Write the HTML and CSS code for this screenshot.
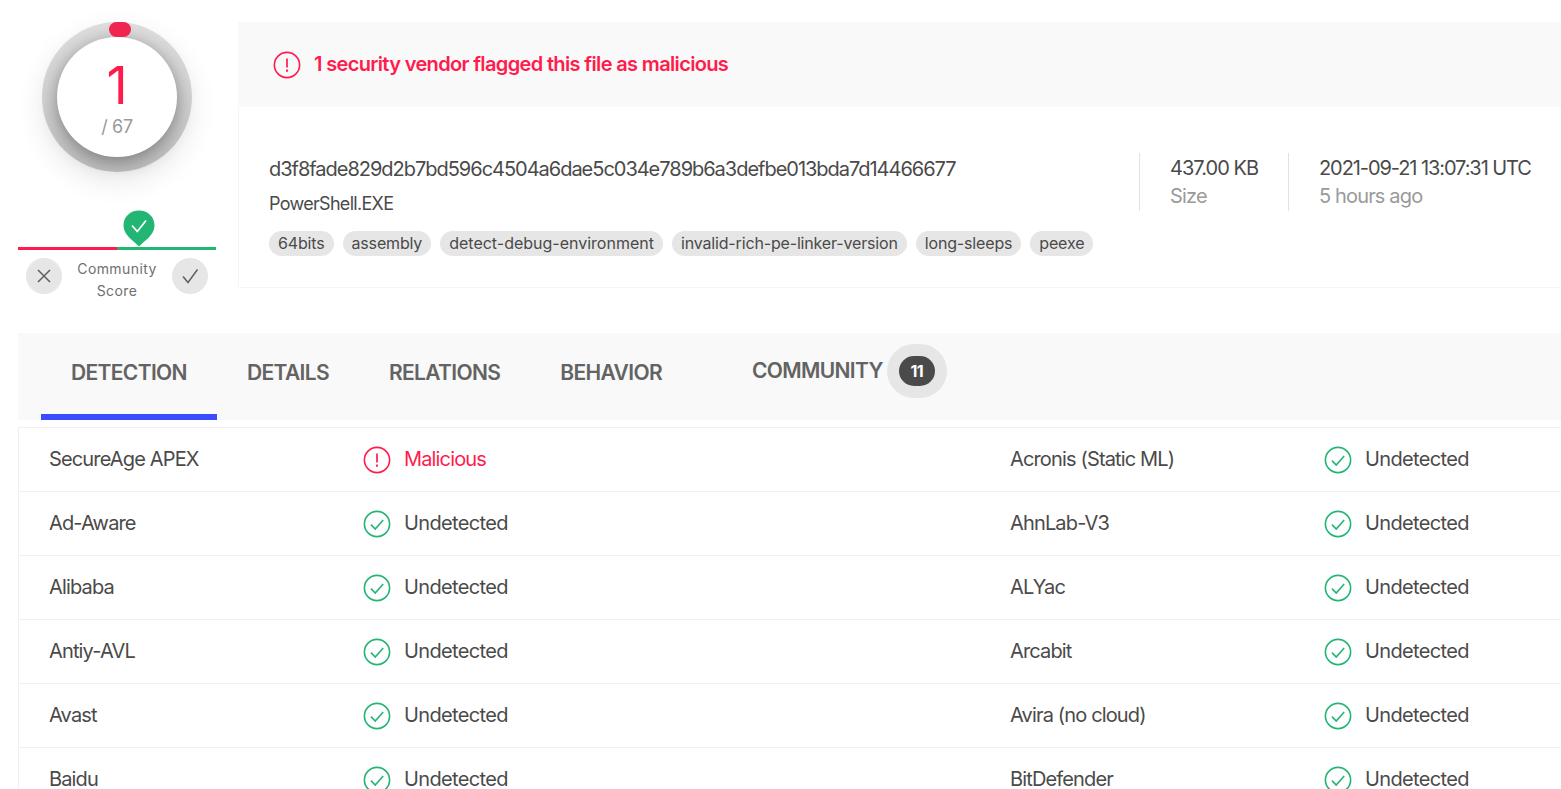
FILE: index.html
```html
<!DOCTYPE html>
<html lang="en">
<head>
<meta charset="utf-8">
<title>VirusTotal</title>
<link rel="stylesheet" href="styles.css">
</head>
<body>
<svg class="sprite" width="0" height="0" aria-hidden="true">
  <symbol id="warn" viewBox="0 0 28 28"><circle cx="14" cy="14" r="12.6" fill="none" stroke="currentColor" stroke-width="1.6"/><path d="M14 7.500v9" stroke="currentColor" stroke-width="1.700" fill="none"/><path d="M14 18.600v2.100" stroke="currentColor" stroke-width="1.900" fill="none"/></symbol>
  <symbol id="ok" viewBox="0 0 28 28"><circle cx="14" cy="14" r="12.6" fill="none" stroke="currentColor" stroke-width="1.6"/><path d="M8 14.600l4.200 4.400 8-9" stroke="currentColor" stroke-width="1.600" fill="none"/></symbol>
</svg>
<div class="page">
  <section class="top">
    <aside class="score">
      <div class="ring">
        <span class="pill"></span>
        <div class="disc">
          <span class="positives">1</span>
          <span class="total">/ 67</span>
        </div>
      </div>
      <div class="vote">
        <svg class="shield" width="32" height="37" viewBox="0 0 32 37"><path d="M16 36.500C11 31 0.500 25.500 0.500 15.500C0.500 6.500 7.500 0.500 16 0.500C24.500 0.500 31.500 6.500 31.500 15.500C31.500 25.500 21 31 16 36.500Z" fill="#22b573"/><path d="M9 15.500l5.300 6 8.700-11" fill="none" stroke="#fff" stroke-width="1.700"/></svg>
        <div class="meter"><span class="meter-bad"></span><span class="meter-good"></span></div>
        <div class="vote-row">
          <span class="vote-btn"><svg width="16" height="16" viewBox="0 0 16 16"><path d="M2 2l12 12M14 2L2 14" stroke="#5f5f5f" stroke-width="1.500" fill="none"/></svg></span>
          <span class="vote-label">Community<br>Score</span>
          <span class="vote-btn"><svg width="18" height="16" viewBox="0 0 18 16"><path d="M2 8.500l5 6L16.500 1.500" stroke="#5f5f5f" stroke-width="1.500" fill="none"/></svg></span>
        </div>
      </div>
    </aside>
    <div class="card">
      <div class="banner">
        <svg class="ico red"><use href="#warn"/></svg>
        <span class="banner-text">1 security vendor flagged this file as malicious</span>
      </div>
      <div class="info">
        <div class="ident">
          <div class="hash">d3f8fade829d2b7bd596c4504a6dae5c034e789b6a3defbe013bda7d14466677</div>
          <div class="fname">PowerShell.EXE</div>
          <div class="tags">
            <span class="tag">64bits</span>
            <span class="tag">assembly</span>
            <span class="tag tag-wide">detect-debug-environment</span>
            <span class="tag">invalid-rich-pe-linker-version</span>
            <span class="tag">long-sleeps</span>
            <span class="tag">peexe</span>
          </div>
        </div>
        <div class="stat stat-size"><div class="stat-main">437.00 KB</div><div class="stat-sub">Size</div></div>
        <div class="stat stat-date"><div class="stat-main">2021-09-21 13:07:31 UTC</div><div class="stat-sub">5 hours ago</div></div>
      </div>
    </div>
  </section>
  <nav class="tabs">
    <a class="tab tab-active">DETECTION</a>
    <a class="tab">DETAILS</a>
    <a class="tab">RELATIONS</a>
    <a class="tab">BEHAVIOR</a>
    <a class="tab tab-community">COMMUNITY <span class="halo"><span class="count">11</span></span></a>
  </nav>
  <div class="table">
    <div class="row">
      <span class="name">SecureAge APEX</span><span class="verdict red"><svg class="ico"><use href="#warn"/></svg><span class="vtext vtext-bad">Malicious</span></span>
      <span class="name">Acronis (Static ML)</span><span class="verdict"><svg class="ico green"><use href="#ok"/></svg><span class="vtext">Undetected</span></span>
    </div>
    <div class="row">
      <span class="name">Ad-Aware</span><span class="verdict"><svg class="ico green"><use href="#ok"/></svg><span class="vtext">Undetected</span></span>
      <span class="name">AhnLab-V3</span><span class="verdict"><svg class="ico green"><use href="#ok"/></svg><span class="vtext">Undetected</span></span>
    </div>
    <div class="row">
      <span class="name">Alibaba</span><span class="verdict"><svg class="ico green"><use href="#ok"/></svg><span class="vtext">Undetected</span></span>
      <span class="name">ALYac</span><span class="verdict"><svg class="ico green"><use href="#ok"/></svg><span class="vtext">Undetected</span></span>
    </div>
    <div class="row">
      <span class="name">Antiy-AVL</span><span class="verdict"><svg class="ico green"><use href="#ok"/></svg><span class="vtext">Undetected</span></span>
      <span class="name">Arcabit</span><span class="verdict"><svg class="ico green"><use href="#ok"/></svg><span class="vtext">Undetected</span></span>
    </div>
    <div class="row">
      <span class="name">Avast</span><span class="verdict"><svg class="ico green"><use href="#ok"/></svg><span class="vtext">Undetected</span></span>
      <span class="name">Avira (no cloud)</span><span class="verdict"><svg class="ico green"><use href="#ok"/></svg><span class="vtext">Undetected</span></span>
    </div>
    <div class="row">
      <span class="name">Baidu</span><span class="verdict"><svg class="ico green"><use href="#ok"/></svg><span class="vtext">Undetected</span></span>
      <span class="name">BitDefender</span><span class="verdict"><svg class="ico green"><use href="#ok"/></svg><span class="vtext">Undetected</span></span>
    </div>
  </div>
</div>
</body>
</html>
```
FILE: styles.css
```css
* { box-sizing: border-box; }
html, body { margin: 0; height: 100%; overflow: hidden; background: #fff; }
body { font-family: Inter, "Liberation Sans", sans-serif; color: #4a4a4a; }
.sprite { position: absolute; }
.page { width: 1561px; height: 789px; overflow: hidden; padding-top: 22px; }
.top { display: flex; height: 311px; }
.score { width: 238px; flex: none; padding-left: 18px; display: flex; flex-direction: column; }
.ring {
  position: relative; width: 150px; height: 150px; margin-left: 24px; border-radius: 50%;
  background: linear-gradient(180deg, #dedede 0%, #d2d2d2 50%, #bdbdbd 100%);
  box-shadow: 0 10px 28px rgba(0,0,0,.09);
  display: flex; align-items: center; justify-content: center;
}
.pill { position: absolute; top: 0; left: 67px; width: 22px; height: 15px; border-radius: 8px; background: #ef2450; }
.disc {
  width: 120px; height: 120px; border-radius: 50%; background: #fff;
  box-shadow: 0 4px 18px rgba(0,0,0,.38);
  display: flex; flex-direction: column; align-items: center; padding-top: 21px;
}
.positives { font-size: 52px; line-height: 56px; color: #ff1c4d; font-weight: 400; }
.total { font-size: 18px; line-height: 22px; color: #9a9a9a; margin-top: 2px; letter-spacing: -.3px; }
.vote { margin-top: 38px; display: flex; flex-direction: column; width: 198px; }
.shield { display: block; margin-left: 105px; }
.meter { display: flex; width: 198px; height: 3px; }
.meter-bad { flex: 1; background: #ff1c4d; }
.meter-good { flex: 1; background: #22b573; }
.vote-row { display: flex; justify-content: space-between; align-items: flex-start; width: 182px; margin: 8px 0 0 8px; }
.vote-btn { width: 36px; height: 36px; border-radius: 50%; background: #e6e6e6; display: flex; align-items: center; justify-content: center; }
.vote-label { font-size: 14px; line-height: 22px; text-align: center; color: #6f6f6f; letter-spacing: .4px; }
.card { flex: 1; height: 266px; border: 1px solid #f5f5f5; border-top: 0; border-right: 0; }
.banner { height: 85px; background: #f9f9f9; display: flex; align-items: center; padding-left: 35px; gap: 12px; margin-left: -1px; }
.ico { width: 28px; height: 28px; flex: none; }
.red { color: #ff1c4d; }
.green { color: #22b573; }
.banner-text { font-size: 20px; font-weight: 600; color: #ff1c4d; letter-spacing: -.65px; margin: 0 0 2px 1px; }
.info { display: flex; padding: 46px 0 0 30px; }
.ident { width: 870px; flex: none; padding-top: 1px; }
.hash { font-size: 20px; line-height: 30px; letter-spacing: -1.02px; }
.fname { font-size: 18px; line-height: 26px; margin-top: 7px; letter-spacing: -.7px; }
.tags { display: flex; gap: 9px; margin-top: 14px; }
.tag { font-size: 16px; line-height: 25px; padding: 0 9px; border-radius: 13px; background: #e6e6e6; letter-spacing: -.16px; }
.tag-wide { letter-spacing: 0; }
.stat { height: 58px; border-left: 1px solid #e2e2e2; padding-left: 30px; flex: none; letter-spacing: -.95px; }
.stat-size { width: 149px; }
.stat-main { font-size: 20px; line-height: 30px; }
.stat-date .stat-main { letter-spacing: -1.08px; }
.stat-sub { font-size: 20px; line-height: 27px; color: #9a9a9a; letter-spacing: -.85px; }
.tabs { display: flex; margin-left: 18px; height: 87px; background: #f9f9f9; padding-left: 23px; }
.tab { display: flex; align-items: flex-start; padding: 25px 30px 0; font-size: 21px; line-height: 30px; font-weight: 600; color: #636363; letter-spacing: -.65px; }
.tab-active { width: 176px; border-bottom: 6px solid #3b4bff; }
.tab-community { margin-left: 30px; padding-top: 0; align-items: center; height: 76px; gap: 4px; }
.halo { width: 60px; height: 54px; border-radius: 27px; background: #e6e6e6; display: flex; align-items: center; justify-content: center; }
.count { width: 36px; height: 30px; border-radius: 15px; background: #4a4a4a; color: #fff; font-size: 16px; font-weight: 700; text-align: center; line-height: 30px; }
.table { margin: 7px 0 0 18px; border-top: 1px solid #f0f0f0; border-left: 1px solid #f0f0f0; }
.row { display: grid; grid-template-columns: 314px 647px 314px 1fr; height: 64px; padding-left: 30px; border-bottom: 1px solid #f0f0f0; align-items: center; }
.name { font-size: 20px; letter-spacing: -.85px; margin-bottom: 2px; }
.verdict { font-size: 20px; display: flex; align-items: center; gap: 13px; }
.vtext { letter-spacing: -.65px; margin-bottom: 2px; }
.vtext-bad { letter-spacing: -.85px; }
```
